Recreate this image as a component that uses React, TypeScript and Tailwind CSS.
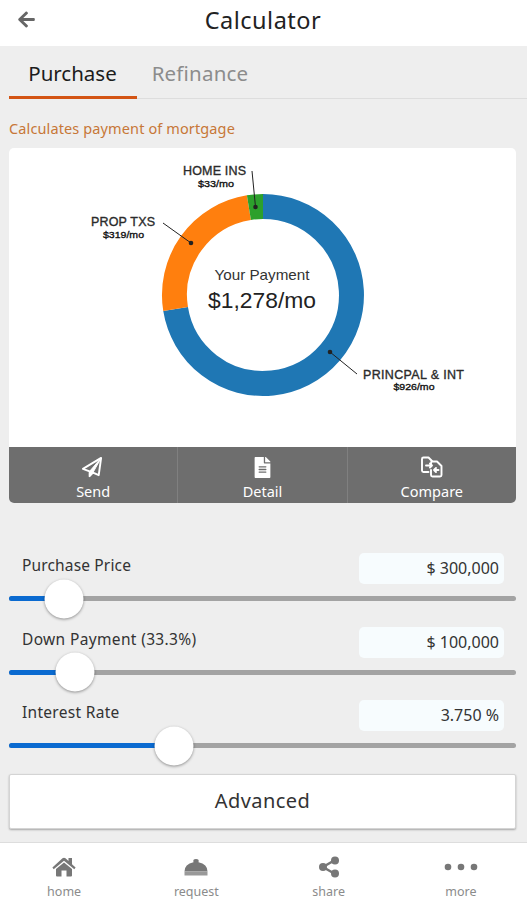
import type { ReactNode } from "react";
import { FaArrowLeft, FaFileAlt } from "react-icons/fa";

function Tool({ label, children, divider }: { label: string; children: ReactNode; divider?: boolean }) {
  return (
    <button className={`flex flex-1 flex-col items-center pt-2 text-white ${divider ? "border-l border-[#808080]" : ""}`}>
      <span className="flex h-6 shrink-0 items-center justify-center">{children}</span>
      <span className="text-[14.5px] leading-[25px]">{label}</span>
    </button>
  );
}

function SliderRow({ label, value, position, labelClass }: { label: string; value: string; position: number; labelClass: string }) {
  return (
    <div className="flex h-[73.5px] flex-col">
      <div className="flex h-[31px] items-start justify-between pr-3 pl-[13px]">
        <span className={`text-[15.5px] leading-[24px] text-[#333] ${labelClass}`}>{label}</span>
        <span className="h-[31px] w-[145px] rounded-[5px] bg-[#f7fcfe] pr-[5px] text-right text-[16px] leading-[31px] text-[#333]">{value}</span>
      </div>
      <div className="relative mt-[12px] h-[5px] rounded-full bg-[#a3a3a3]">
        <div className="h-full rounded-full bg-[#0a6ad0]" style={{ width: position }} />
        <div className="absolute top-1/2 size-[39px] -translate-x-1/2 -translate-y-1/2 rounded-full bg-white shadow-[0_1px_3px_rgba(0,0,0,0.4)]" style={{ left: position }} />
      </div>
    </div>
  );
}

function NavItem({ label, children }: { label: string; children: ReactNode }) {
  return (
    <button className="flex flex-1 flex-col items-center justify-start pt-[11px] text-[#777]">
      <span className="flex h-[26px] shrink-0 items-center">{children}</span>
      <span className="text-[12.5px] leading-[23px] text-[#8b8b8b]">{label}</span>
    </button>
  );
}

function PaymentChart() {
  return (
    <svg viewBox="9 148 507 299" className="block h-[299px] w-[507px]" fontFamily='"Liberation Sans", Arial, sans-serif' textAnchor="middle">
      <g fill="none" strokeWidth="25">
        <path d="M263 206.500A88.500 88.500 0 1 1 175.600 309.100" stroke="#1f77b4" />
        <path d="M175.600 309.100A88.500 88.500 0 0 1 248.900 207.630" stroke="#ff7f0e" />
        <path d="M248.900 207.630A88.500 88.500 0 0 1 263 206.500" stroke="#2ca02c" />
      </g>
      <g stroke="#222" strokeWidth="1">
        <path d="M252 171L255.500 207M163 223L191 243M330 352L357 374" />
      </g>
      <g fill="#222">
        <circle cx="255.500" cy="207" r="2.300" />
        <circle cx="191" cy="243" r="2.300" />
        <circle cx="330" cy="352" r="2.300" />
      </g>
      <g fill="#2b2b2b" stroke="#2b2b2b" strokeWidth="0.350" fontSize="12.500">
        <text x="214.500" y="174.500" textLength="63">HOME INS</text>
        <text x="123" y="225.500" textLength="64">PROP TXS</text>
        <text x="413.500" y="378.500" textLength="101">PRINCPAL &amp; INT</text>
      </g>
      <g fill="#111" stroke="#111" strokeWidth="0.350" fontSize="9.500">
        <text x="216" y="187" textLength="36" lengthAdjust="spacingAndGlyphs">$33/mo</text>
        <text x="123.500" y="238" textLength="41" lengthAdjust="spacingAndGlyphs">$319/mo</text>
        <text x="414" y="390" textLength="41" lengthAdjust="spacingAndGlyphs">$926/mo</text>
      </g>
      <text x="262" y="280" fontSize="15" fill="#333" textLength="95" lengthAdjust="spacingAndGlyphs">Your Payment</text>
      <text x="262" y="307.500" fontSize="22.500" fill="#222" textLength="108" lengthAdjust="spacingAndGlyphs">$1,278/mo</text>
    </svg>
  );
}

export default function App() {
  return (
    <div className="flex h-[900px] w-[527px] flex-col overflow-hidden bg-[#eee] font-['Noto_Sans',sans-serif]">
      <header className="flex h-[46px] shrink-0 items-center bg-white">
        <button className="w-[54px] pb-2 pl-[17px] text-[#666]"><FaArrowLeft size={19} /></button>
        <h1 className="flex-1 pr-[55px] pb-1.5 text-center text-[23.5px] leading-[36px] tracking-[0.5px] text-[#222]">Calculator</h1>
      </header>
      <nav className="ml-[9px] flex h-[53px] shrink-0 border-b border-[#ddd] text-[20.5px] leading-[54px]">
        <button className="h-[53px] w-[128px] border-b-[3px] border-[#d35414] pr-px text-[#1c1c1c]">Purchase</button>
        <button className="h-[53px] w-[126px] tracking-[0.2px] text-[#8c8c8c]">Refinance</button>
      </nav>
      <main className="flex flex-1 flex-col pr-[11px] pl-[9px]">
        <p className="h-[49px] pt-[17px] text-[14.5px] leading-[24px] tracking-[0.12px] text-[#c77737]">Calculates payment of mortgage</p>
        <section className="overflow-hidden rounded-[5px] bg-white">
          <PaymentChart />
          <div className="flex h-[56px] bg-[#6e6e6e]">
            <Tool label="Send">
              <svg viewBox="0 0 24 24" className="mr-0.5 size-[23px]" fill="none" stroke="currentColor" strokeWidth="2" strokeLinejoin="round">
                <path d="M2 13.500L21 2L18.500 20L12.500 17.300L9 21V16Z" />
                <path d="M9 16L21 2L12.500 17.300L9 21Z" fill="currentColor" strokeWidth="1" />
              </svg>
            </Tool>
            <Tool label="Detail" divider><FaFileAlt size={21} /></Tool>
            <Tool label="Compare" divider>
              <svg viewBox="0 0 24 24" className="size-6" fill="none" stroke="currentColor" strokeWidth="1.900" strokeLinejoin="round" strokeLinecap="round">
                <path d="M8.500 17H3.500Q2 17 2 15.500V4Q2 2.500 3.500 2.500H8.500L12 6" />
                <path d="M11 9V8Q11 6.500 12.500 6.500H17L21.500 11V20Q21.500 21.500 20 21.500H12.500Q11 21.500 11 20V15" />
                <path d="M6 10.500H12M10 8.500L12 10.500L10 12.500M18.500 15H14M16 13L14 15L16 17" />
              </svg>
            </Tool>
          </div>
        </section>
        <div className="mt-[50px]">
          <SliderRow label="Purchase Price" value="$ 300,000" position={54.5} labelClass="tracking-[0.15px]" />
          <SliderRow label="Down Payment (33.3%)" value="$ 100,000" position={66} labelClass="tracking-[0.35px]" />
          <SliderRow label="Interest Rate" value="3.750 %" position={165} labelClass="tracking-[0.3px]" />
        </div>
        <button className="h-[55px] rounded-[2px] border border-[#d4d4d4] bg-white text-[20px] tracking-[0.45px] text-[#333] shadow-[0_1px_2px_rgba(0,0,0,0.3)]">Advanced</button>
      </main>
      <footer className="-ml-0.5 flex h-[58px] w-[529px] shrink-0 border-t border-[#ddd] bg-white">
        <NavItem label="home">
          <svg viewBox="0 0 24 20" className="h-5 w-6" fill="currentColor">
            <path d="M4 12L12 5.500L20 12V18.500Q20 19.500 19 19.500H14.500V13.500H9.500V19.500H5Q4 19.500 4 18.500Z" />
            <path d="M.4 10.500L10.500 1.300Q12 .1 13.500 1.300L16.500 4V1H20V7.200L23.600 10.500L22.300 12.200L12 3.700L1.700 12.200Z" />
          </svg>
        </NavItem>
        <NavItem label="request">
          <svg viewBox="0 0 24 18" className="h-[18px] w-6" fill="currentColor">
            <path d="M.5 13.500Q.5 6 9.500 4.200Q8.500 1 12 1Q15.500 1 14.500 4.200Q23.500 6 23.500 13.500Z" />
            <path d="M.5 13.500H23.500V17.500H.5Z" fill="#999" />
          </svg>
        </NavItem>
        <NavItem label="share">
          <svg viewBox="0 0 22 22" className="size-[22px]" fill="currentColor">
            <path d="M17 4L5 11L17 18" fill="none" stroke="currentColor" strokeWidth="2.500" />
            <circle cx="17" cy="4.500" r="4" /><circle cx="5" cy="11" r="4" /><circle cx="17" cy="17.500" r="4" />
          </svg>
        </NavItem>
        <NavItem label="more">
          <svg viewBox="0 0 34 8" className="h-2 w-[34px]" fill="currentColor">
            <circle cx="4" cy="4" r="3.300" /><circle cx="17" cy="4" r="3.300" /><circle cx="30" cy="4" r="3.300" />
          </svg>
        </NavItem>
      </footer>
    </div>
  );
}
